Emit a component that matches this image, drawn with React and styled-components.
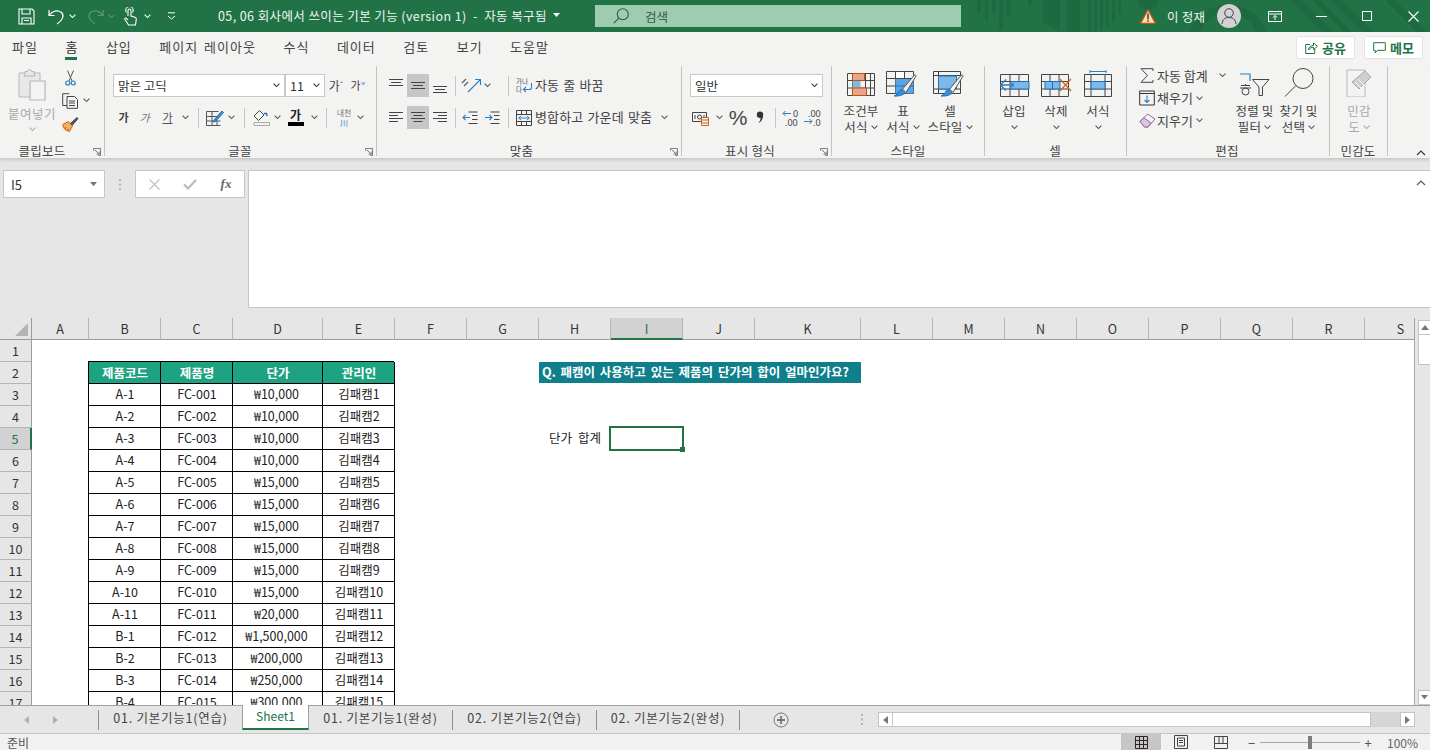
import React from 'react';
import styled, { createGlobalStyle } from 'styled-components';

const Global = createGlobalStyle`
  html, body { margin: 0; padding: 0; width: 1430px; height: 750px; overflow: hidden; background: #e6e6e6; }
  * { box-sizing: border-box; }
  body { font-family: "Noto Sans CJK KR", "Noto Sans", sans-serif; font-size: 13px; color: #444; }
`;

const Page = styled.div`width:1430px;height:750px;display:flex;flex-direction:column;overflow:hidden;`;

/* ---------- title bar ---------- */
const TitleBar = styled.header`position:relative;height:32px;background:#217346;display:flex;align-items:center;color:#fff;flex:none;overflow:hidden;`;
const Pattern = styled.svg`position:absolute;left:960px;top:0;width:470px;height:32px;`;
const Qat = styled.div`position:relative;display:flex;align-items:center;width:218px;padding-left:15px;height:32px;`;
const QatBtn = styled.span`display:flex;align-items:center;justify-content:center;flex:none;width:${p => p.$w}px;height:32px;`;
const Mirror = styled.span`display:flex;transform:scaleX(-1);`;
const DocTitle = styled.div`position:relative;width:377px;font-size:12.5px;letter-spacing:.4px;color:#eef6f1;white-space:pre;display:flex;align-items:center;gap:6px;padding-bottom:2px;`;
const SearchBox = styled.div`position:relative;width:366px;height:22px;background:#9fcbb0;display:flex;align-items:center;padding-left:18px;gap:16px;font-size:12.5px;color:#2c5a40;`;
const TitleRight = styled.div`position:relative;margin-left:auto;margin-right:-6px;display:flex;align-items:center;height:32px;`;
const UserName = styled.span`font-size:12.5px;color:#eef6f1;width:52px;padding-left:2px;letter-spacing:.2px;margin-left:7px;`;
const Avatar = styled.span`width:24px;height:24px;border-radius:50%;background:#d2d2d2;display:flex;align-items:center;justify-content:center;margin-right:11px;`;
const WinBtn = styled.span`display:flex;align-items:center;justify-content:center;width:${p => p.$w}px;height:32px;`;

/* ---------- tabs ---------- */
const TabRow = styled.nav`height:33px;background:#f3f3f2;flex:none;display:flex;align-items:flex-start;padding:2px 0 0 12px;gap:27.5px;`;
const RibbonTab = styled.span`position:relative;font-size:13px;letter-spacing:1px;word-spacing:2px;color:${p => p.$on ? '#2b2b2b' : '#444'};line-height:26px;
  ${p => p.$on && `&::after{content:"";position:absolute;left:0;right:1px;bottom:0;height:3px;background:#217346;}`}`;
const TabActions = styled.div`margin:2px 0 0 auto;display:flex;gap:9px;padding-right:7px;`;
const ActionBtn = styled.button`width:${p => p.$w}px;height:23px;background:#fff;border:1px solid #e3e3e3;border-radius:2px;display:flex;align-items:center;justify-content:center;gap:4px;color:#217346;font:700 13px "Noto Sans CJK KR",sans-serif;padding:0;`;

/* ---------- ribbon ---------- */
const Ribbon = styled.section`position:relative;z-index:1;height:93px;background:#f3f3f2;flex:none;display:flex;padding-top:1px;box-shadow:0 2px 3px rgba(0,0,0,.14);`;
const Group = styled.div`position:relative;width:${p => p.$w}px;height:90px;display:flex;flex-direction:column;flex:none;border-right:1px solid ${p => p.$plain ? 'transparent' : '#c4c4c4'};`;
const GroupBody = styled.div`flex:1;display:flex;min-height:0;padding:${p => p.$pad || '0 0 0 8px'};flex-direction:${p => p.$col ? 'column' : 'row'};`;
const GroupLabel = styled.div`height:16px;line-height:16px;margin-bottom:-3px;padding-right:${p => p.$pr ?? 1}px;text-align:${p => p.$end ? 'right' : 'center'};font-size:12.5px;letter-spacing:.2px;color:#444;`;
const Launcher = styled.svg`position:absolute;right:3px;bottom:0;width:8px;height:8px;`;
const ToolRow = styled.div`display:flex;align-items:center;height:23px;margin-bottom:${p => p.$mb ?? 9}px;`;
const Slot = styled.span`display:flex;align-items:center;justify-content:center;flex:none;width:${p => p.$w}px;height:${p => p.$h || 23}px;background:${p => p.$on ? '#c6c6c6' : 'transparent'};`;
const VSep = styled.span`display:block;width:1px;height:20px;background:#c6c6c6;`;
const Select = styled.div`width:${p => p.$w}px;height:23px;flex:none;background:#fff;border:1px solid #c8c8c8;display:flex;align-items:center;justify-content:space-between;padding:0 4px;font-size:12.5px;color:#333;`;
const ToolText = styled.span`font-size:13px;letter-spacing:.15px;word-spacing:1px;color:#444;white-space:pre;flex:none;padding-bottom:2px;width:${p => p.$w ? p.$w + 'px' : 'auto'};`;
const Glyph = styled.span`font-size:${p => p.$s || 11}px;color:${p => p.$c || '#444'};font-weight:${p => p.$b ? 700 : 400};font-style:${p => p.$i ? 'italic' : 'normal'};text-decoration:${p => p.$u ? 'underline' : 'none'};line-height:1;`;
const PercentGlyph = styled(Glyph)`font-family:"Liberation Sans",sans-serif;`;
const StackSlot = styled.span`display:flex;flex:none;flex-direction:column;align-items:center;justify-content:center;width:${p => p.$w}px;height:23px;`;
const ColorBar = styled.span`display:block;width:16px;height:4px;background:#000;margin-top:1px;`;
const TinyLine = styled.span`font-size:8px;line-height:10px;color:${p => p.$c || '#777'};`;
const PasteBtn = styled.div`width:48px;display:flex;flex-direction:column;align-items:center;padding-top:3px;color:#a9a9a9;font-size:12.5px;line-height:16px;flex:none;`;
const PasteLabel = styled.span`margin:5px 0 5px;letter-spacing:.5px;white-space:nowrap;`;
const ClipCol = styled.div`display:flex;flex-direction:column;align-items:flex-start;padding:0 0 0 6px;`;
const ClipRow = styled.div`height:23px;display:flex;align-items:center;gap:4px;`;
const BigBtn = styled.div`width:${p => p.$w}px;flex:none;display:flex;flex-direction:column;align-items:center;padding-top:${p => p.$pt ?? 6}px;color:${p => p.$dim ? '#a9a9a9' : '#444'};font-size:12.5px;letter-spacing:.2px;line-height:16px;text-align:center;`;
const BigIcon = styled.span`height:${p => p.$h || 25}px;display:flex;align-items:flex-end;justify-content:center;margin-bottom:6px;`;
const BigLine = styled.span`display:flex;align-items:center;gap:3px;white-space:nowrap;height:16px;`;
const EditCol = styled.div`width:106px;flex:none;display:flex;flex-direction:column;margin-top:-2px;padding-left:10px;`;
const EditRow = styled.div`height:22.5px;display:flex;align-items:center;font-size:13px;color:#444;white-space:pre;`;

/* ---------- formula area ---------- */
const FormulaArea = styled.section`height:160px;flex:none;background:#e6e6e6;display:flex;padding:12px 0 10px 3px;`;
const NameBox = styled.div`width:102px;height:28px;background:#fff;border:1px solid #c6c6c6;display:flex;align-items:center;justify-content:space-between;padding:0 7px 0 7px;font-size:13px;color:#333;`;
const Dots = styled.span`width:30px;height:28px;display:flex;align-items:center;justify-content:center;`;
const FxBox = styled.div`width:110px;height:28px;background:#fff;border:1px solid #c6c6c6;display:flex;align-items:center;`;
const FxSlot = styled.span`width:36px;display:flex;justify-content:center;`;
const Fx = styled.span`font:italic 700 13px "Liberation Serif",serif;color:#666;`;
const FormulaInput = styled.div`position:relative;flex:1;margin-left:3px;background:#fff;border:1px solid #c6c6c6;border-right:0;display:flex;justify-content:flex-end;padding:9px 4px 0 0;`;

/* ---------- sheet ---------- */
const Main = styled.main`height:387px;flex:none;display:flex;background:#e6e6e6;`;
const SheetFrame = styled.div`width:1415px;height:387px;overflow:hidden;border-right:1px solid #a6a6a6;background:#fff;`;
const SheetGrid = styled.div`display:grid;grid-template-columns:32px 57px 72px 72px 90px 72px 72px 72px 72px 72px 72px 106px repeat(8,72px);grid-auto-rows:22px;width:1436px;`;
const Corner = styled.div`background:#e6e6e6;border-right:1px solid #9c9c9c;border-bottom:1px solid #9c9c9c;display:flex;align-items:flex-end;justify-content:flex-end;padding:0 3px 3px 0;`;
const ColHead = styled.div`background:${p => p.$on ? '#d2d2d2' : '#e6e6e6'};border-right:1px solid #b4b4b4;border-bottom:${p => p.$on ? '2px solid #217346' : '1px solid #9c9c9c'};display:flex;align-items:center;justify-content:center;font-size:12.5px;color:${p => p.$on ? '#217346' : '#333'};`;
const RowHead = styled.div`background:${p => p.$on ? '#d2d2d2' : '#e6e6e6'};border-right:${p => p.$on ? '2px solid #217346' : '1px solid #9c9c9c'};border-bottom:1px solid #b4b4b4;display:flex;align-items:center;justify-content:center;font-size:12.5px;color:${p => p.$on ? '#217346' : '#333'};`;
const Cell = styled.div`position:relative;background:#fff;display:flex;align-items:center;justify-content:center;font-size:12.5px;word-spacing:3px;color:#222;white-space:nowrap;padding:0 ${p => p.$pr || 0}px 3px 0;`;
const TableCell = styled(Cell)`box-shadow:inset -1px -1px 0 #000,-1px -1px 0 #000;`;
const HeadCell = styled(TableCell)`background:#1da381;color:#fff;font-weight:700;padding-bottom:2px;`;
const QuestionCell = styled(Cell)`grid-column:span 4;height:21px;background:#0f7f8c;color:#fff;font-weight:700;justify-content:flex-start;padding:0 0 2px 3px;word-spacing:2px;`;
const Selection = styled.div`position:absolute;z-index:2;left:-2px;top:-2px;right:-1px;bottom:-1px;border:2px solid #217346;`;
const Handle = styled.span`position:absolute;right:-3px;bottom:-3px;width:5px;height:5px;background:#217346;`;
const VScroll = styled.aside`width:15px;height:387px;display:flex;flex-direction:column;align-items:flex-end;padding-top:2px;`;
const VArrow = styled.span`width:12px;height:15px;flex:none;background:#fff;border:1px solid #c4c4c4;border-right:0;display:flex;align-items:center;justify-content:center;`;
const VThumb = styled.span`width:12px;height:30px;flex:none;background:#fff;border:1px solid #c4c4c4;border-right:0;border-top:0;`;
const VFill = styled.span`flex:1;`;

/* ---------- sheet tabs ---------- */
const TabsBar = styled.div`position:relative;z-index:1;height:29px;flex:none;background:#e6e6e6;border-top:1px solid #a0a0a0;border-bottom:1px solid #c6c6c6;display:flex;align-items:center;`;
const TabNav = styled.div`width:98px;display:flex;padding-left:20px;gap:17px;align-items:center;`;
const NavArrow = styled.span`width:12px;display:flex;justify-content:center;`;
const TabSep = styled.span`width:1px;height:20px;background:#8f8f8f;flex:none;`;
const SheetTab = styled.div`width:${p => p.$w}px;flex:none;text-align:center;font-size:${p => p.$on ? 12 : 12.5}px;letter-spacing:${p => p.$on ? 0 : .75}px;color:${p => p.$on ? '#217346' : '#444'};background:${p => p.$on ? '#fff' : 'transparent'};height:${p => p.$on ? 25 : 22}px;line-height:${p => p.$on ? 21 : 18}px;border:${p => p.$on ? '1px solid #a0a0a0' : '0'};border-top:0;border-bottom:${p => p.$on ? '2px solid #217346' : '0'};align-self:${p => p.$on ? 'flex-start' : 'center'};margin-top:${p => p.$on ? -1 : 0}px;`;
const PlusSlot = styled.span`margin-left:31px;width:20px;display:flex;justify-content:center;`;
const BarDots = styled.span`margin-left:60px;width:22px;display:flex;justify-content:center;`;
const HScroll = styled.div`margin-left:5px;width:537px;height:15px;display:flex;`;
const HArrow = styled.span`width:15px;height:15px;flex:none;background:#fff;border:1px solid #c4c4c4;display:flex;align-items:center;justify-content:center;`;
const HThumb = styled.span`width:478px;height:15px;flex:none;background:#fff;border:1px solid #c4c4c4;border-left:0;`;
const HTrack = styled.span`flex:1;background:#d6d6d6;`;

/* ---------- status ---------- */
const StatusBar = styled.footer`height:16px;flex:none;background:#f1f1f1;display:flex;align-items:center;padding-left:7px;font-size:12px;color:#555;overflow:hidden;`;
const ViewBtn = styled.span`width:40px;height:16px;display:flex;align-items:center;justify-content:center;background:${p => p.$on ? '#c6c6c6' : 'transparent'};flex:none;`;
const StatusRight = styled.div`margin-left:auto;display:flex;align-items:center;height:16px;padding-right:13px;`;
const ZoomGap = styled.span`width:6px;flex:none;`;
const ZoomBar = styled.div`position:relative;width:100px;height:1px;background:#a8a8a8;margin:0 4px;`;
const ZoomThumb = styled.span`position:absolute;left:48px;top:-6px;width:4px;height:13px;background:#7f7a7f;`;
const ZoomPct = styled.span`margin-left:15px;width:30px;font-size:12px;color:#666;white-space:nowrap;`;

/* ---------- icons ---------- */
const Chev = ({ c = '#555', s = 7 }) => (
  <svg width={s} height={s * 0.62} viewBox="0 0 7 4.3"><path d="M.6.6 3.5 3.5 6.4.6" fill="none" stroke={c} strokeWidth="1.1" /></svg>
);
const Launch = () => (
  <Launcher viewBox="0 0 9 9"><path d="M.5 3V.5H8.5V8.5H6M2 2 7 7M7 4V7H4" fill="none" stroke="#6a6a6a" strokeWidth="1" /></Launcher>
);
const Save = () => (
  <svg width="17" height="17" viewBox="0 0 17 17" fill="none" stroke="#fff" strokeWidth="1.1"><path d="M1 1h13l2 2v13H1zM4 1v5h8V1M4 16v-6h9v6M6 12.5h5" /></svg>
);
const Undo = ({ c = '#fff' }) => (
  <svg width="17" height="17" viewBox="0 0 17 17" fill="none" stroke={c} strokeWidth="1.2"><path d="M1 2v5.500h5.500M1.500 7C4 3 9.500 1.500 13.500 4.500c3 3 1.500 7.500-4.500 11.500" /></svg>
);
const Touch = () => (
  <svg width="13" height="19" viewBox="0 0 13 19" fill="none" stroke="#fff" strokeWidth="1.100"><path d="M4 9V3.500a1.500 1.500 0 0 1 3 0V9l4 1.300c1 .4 1.400 1 1.300 2L11.500 18H4.500L1 12.500c-.6-1 .6-2 1.500-1.200L4 13" /><path d="M2.500 5.500a3.500 3.500 0 0 1-.8-2.200A3.600 3.600 0 0 1 9.200 3.300a3.500 3.500 0 0 1-.7 2.200" /></svg>
);
const Customize = () => (
  <svg width="9" height="8" viewBox="0 0 9 8" fill="none" stroke="#fff"><path d="M1 .8h7" /><path d="M1 4l3.500 3L8 4" /></svg>
);
const Caret = () => <svg width="7" height="4" viewBox="0 0 7 4"><path d="M0 0h7L3.500 4z" fill="#fff" /></svg>;
const Magnifier = () => (
  <svg width="16" height="16" viewBox="0 0 16 16" fill="none" stroke="#2c5a40" strokeWidth="1.1"><circle cx="9.800" cy="6.200" r="5.500" /><path d="M5.800 10.200.8 15.200" /></svg>
);
const FindIco = () => (
  <svg width="30" height="29" viewBox="0 0 30 29" fill="none" stroke="#444"><circle cx="19" cy="10.500" r="10" /><path d="M12 17.500 1 28.500" /></svg>
);
const Warn = () => (
  <svg width="16" height="15" viewBox="0 0 16 15"><path d="M8 .8 15.300 14.300H.7z" fill="#f8e0b0" stroke="#c8501a" strokeWidth="1.200" /><path d="M7.300 4.500h1.400v6H7.300zM7.300 11.300h1.400v1.500H7.300z" fill="#333" /></svg>
);
const User = () => (
  <svg width="18" height="18" viewBox="0 0 18 18" fill="none" stroke="#444" strokeWidth="1"><circle cx="9" cy="6" r="4.300" /><path d="M2 17c.5-5 3.500-6.500 7-6.500s6.500 1.500 7 6.500" /></svg>
);
const DisplayOpt = () => (
  <svg width="14" height="11" viewBox="0 0 14 11" fill="none" stroke="#fff"><path d="M.5.5h13v10H.5zM.5 3h13M7 9V4.500M5 6.500l2-2 2 2" /></svg>
);
const Minimize = () => <svg width="11" height="1" viewBox="0 0 11 1"><path d="M0 .5h11" stroke="#fff" /></svg>;
const Maximize = () => <svg width="10" height="10" viewBox="0 0 10 10"><path d="M.5.5h9v9h-9z" fill="none" stroke="#fff" /></svg>;
const CloseX = ({ c = '#fff', s = 11 }) => <svg width={s} height={s} viewBox="0 0 11 11"><path d="M.5.5l10 10M10.500.5l-10 10" stroke={c} fill="none" strokeWidth="1.100" /></svg>;
const ShareIco = () => (
  <svg width="13" height="13" viewBox="0 0 13 13" fill="none" stroke="#217346"><path d="M5 3.500H.7v9h9V8" /><path d="M3.500 9c0-3 2-4.500 5-4.500V2l4 3.300-4 3.300V6.200c-2 0-4 1-5 2.800z" /></svg>
);
const MemoIco = () => (
  <svg width="13" height="12" viewBox="0 0 13 12" fill="none" stroke="#217346"><path d="M.7.7h11.600v7.600H4.500L2.200 11V8.300H.7z" /></svg>
);
const PasteIco = () => (
  <svg width="28" height="32" viewBox="0 0 28 32" fill="none" stroke="#b8b8b8"><path d="M1 4h21v24H1z" fill="#e8e8e8" /><path d="M7 4V2.500h2.500a2 2 0 0 1 4 0H16V4l1 3H6z" fill="#e8e8e8" /><path d="M12 12h15v19H12z" fill="#f3f3f2" strokeWidth="1.200" /></svg>
);
const Scissors = () => (
  <svg width="11" height="16" viewBox="0 0 11 16" fill="none"><path d="M2.500 .5 7 11M8.500 .5 4 11" stroke="#555" /><circle cx="2.800" cy="13" r="2" stroke="#2b80c4" strokeWidth="1.200" /><circle cx="8.200" cy="13" r="2" stroke="#2b80c4" strokeWidth="1.200" /></svg>
);
const CopyIco = () => (
  <svg width="17" height="16" viewBox="0 0 17 16" fill="none" stroke="#444"><path d="M5 12.500H.7V.7h6.500" /><path d="M5 3.500h7.500l3 3v8.800H5z" fill="#f3f3f2" /><path d="M7 8h6M7 10h6M7 12.500h6" /></svg>
);
const Brush = () => (
  <svg width="17" height="16" viewBox="0 0 17 16"><path d="M.7 8.500 6.500 5.500l4 4.500-3 5.500-2-.5 1-2-2 1.500-1.500-1 1-2-2 1z" fill="#f4b060" stroke="#d0641a" /><path d="M8.500 7.500 15 1.500l1 1L10.500 9z" fill="#555" stroke="#444" /></svg>
);
const BorderIco = () => (
  <svg width="18" height="16" viewBox="0 0 18 16" fill="none"><path d="M.5 1.500h12M.5 15.500h14M.5 1.500v14M6 1.500v14M.5 6.500h12M.5 11h14M11 11v4.500" stroke="#555" /><path d="M8 10 16 1l1.500 1.500-8 9L7 12z" fill="#3a8fd6" stroke="#2170b8" /></svg>
);
const FillIco = () => (
  <svg width="17" height="17" viewBox="0 0 17 17" fill="none"><path d="M6.500 1.500 1 7l4.500 4.500L11 6z" stroke="#444" /><path d="M11 4.500h2.500L14 7" stroke="#2170b8" strokeWidth="1.500" /><path d="M1 13.500h15.500V16.500H1z" fill="#f3f3f2" stroke="#aaa" /></svg>
);
const Lines = ({ ys, xs }) => (
  <svg width="15" height="16" viewBox="0 0 15 16" fill="none" stroke="#444">{ys.map((y, i) => <path key={i} d={`M${xs[i][0]} ${y}h${xs[i][1]}`} />)}</svg>
);
const AL = { top: { ys: [1.5, 4.5, 7.5], xs: [[0, 14], [2, 10], [0, 14]] }, mid: { ys: [4.5, 7.500, 10.500], xs: [[0, 14], [2, 10], [0, 14]] }, bot: { ys: [8.5, 11.5, 14.5], xs: [[0, 14], [2, 10], [0, 14]] },
  left: { ys: [2.500, 5.500, 8.500, 11.500], xs: [[0, 14], [0, 9], [0, 14], [0, 9]] }, center: { ys: [2.500, 5.500, 8.500, 11.500], xs: [[0, 14], [2.500, 9], [0, 14], [2.500, 9]] }, right: { ys: [2.500, 5.500, 8.500, 11.500], xs: [[0, 14], [5, 9], [0, 14], [5, 9]] } };
const Orient = () => (
  <svg width="21" height="17" viewBox="0 0 21 17" fill="none"><path d="M7 15 19 3M14 2.500h5.500V8" stroke="#2b80c4" strokeWidth="1.100" /><path d="M1 6l4-4M3 9l4-4" stroke="#666" strokeWidth="1.400" /></svg>
);
const Indent = ({ flip }) => (
  <svg width="16" height="14" viewBox="0 0 16 14" fill="none"><path d="M6.500 1h9M10 4.500h5.500M10 8.500h5.500M6.500 12.500h9" stroke="#444" /><path d={flip ? 'M1 6.500h7M5.500 4l2.500 2.500L5.500 9' : 'M1 6.500h7M3.500 4 1 6.500 3.500 9'} stroke="#2b80c4" strokeWidth="1.100" /></svg>
);
const WrapIco = () => (
  <svg width="17" height="17" viewBox="0 0 17 17" fill="none" overflow="visible"><text x="0" y="6.500" fontSize="6.500" fill="#555" fontFamily="Noto Sans CJK KR">가나</text><text x="0" y="14.500" fontSize="6.500" fill="#555" fontFamily="Noto Sans CJK KR">다</text><path d="M15.500 6v4.500a2 2 0 0 1-2 2H7.500M10 10l-2.500 2.500L10 15" stroke="#2b80c4" strokeWidth="1.100" /></svg>
);
const MergeIco = () => (
  <svg width="16" height="16" viewBox="0 0 16 16" fill="none"><path d="M.5.5h15v15H.5zM.5 4.500h15M.5 11.500h15M5.500.5v4M10.500.5v4M5.500 11.500v4M10.500 11.500v4" stroke="#444" /><path d="M2.500 8h11M5 5.800 2.800 8 5 10.200M11 5.800 13.200 8 11 10.200" stroke="#2b80c4" /></svg>
);
const AcctIco = () => (
  <svg width="18" height="16" viewBox="0 0 18 16" fill="none"><path d="M.5 2.500h14v9H.5z" stroke="#444" /><circle cx="7.500" cy="7" r="2" stroke="#444" /><path d="M3 5v4M12 5v4" stroke="#444" /><path d="M9.500 7.500h7v8h-7z" fill="#f3f3f2" stroke="#d0641a" /><path d="M9.500 10h7M9.500 13h7" stroke="#d0641a" /></svg>
);
const CommaIco = () => (
  <svg width="8" height="13" viewBox="0 0 8 13"><circle cx="4" cy="3.800" r="3.200" fill="#333" /><path d="M7 4c.3 4-2 7-5 8.500 1.800-2 2.600-3.800 2.600-5.500z" fill="#333" /></svg>
);
const IncDec = ({ dec }) => dec ? (
  <svg width="19" height="18" viewBox="0 0 19 18" fill="none" overflow="visible"><text x="4" y="7.500" fontSize="9" fill="#444" fontFamily="Noto Sans">.00</text><text x="9" y="16.500" fontSize="9" fill="#444" fontFamily="Noto Sans">.0</text><path d="M0 12.500h8M5.500 10l2.500 2.500L5.500 15" stroke="#2b80c4" /></svg>
) : (
  <svg width="19" height="18" viewBox="0 0 19 18" fill="none" overflow="visible"><text x="11" y="7.500" fontSize="9" fill="#444" fontFamily="Noto Sans">0</text><text x="3" y="16.500" fontSize="9" fill="#444" fontFamily="Noto Sans">.00</text><path d="M1 4.500h8M3.500 2 1 4.500 3.500 7" stroke="#2b80c4" /></svg>
);
const Tbl = ({ w = 28, x = 0, v = [9.5, 18.5], h = [7.5, 15], c = '#444' }) => (
  <g fill="none" stroke={c}>
    <path d={`M${x + .5} .5h${w - 1}v22h-${w - 1}z`} />
    {v.map(p => <path key={p} d={`M${x + p} .5v22`} />)}
    {h.map(p => <path key={p} d={`M${x + .5} ${p}h${w - 1}`} />)}
  </g>
);
const PaintBrush = ({ dx = 0 }) => (
  <g transform={`translate(${dx} 0)`}>
    <path d="M15 20 28 4.500c1-1 2.500-.3 1.800 1L19 23z" fill="#f3f3f2" stroke="#555" />
    <path d="M13 20c2-2 5-1.500 6 .5 0 3-5 5-11 4.500 3-1 4-3 5-5z" fill="#3a8fd6" stroke="#2170b8" />
  </g>
);
const CondIco = () => (
  <svg width="29" height="24" viewBox="0 0 29 24">
    <Tbl v={[5.5, 18.5, 23.500]} />
    <path d="M5.500 8h8v7h-8z" fill="#7cb8e8" />
    <path d="M5.500 .5h12v7h-12zM5.500 15h14v7.500h-14z" fill="#e8a48c" stroke="#c8500a" />
  </svg>
);
const TableIco = () => (
  <svg width="34" height="26" viewBox="0 0 34 26">
    <Tbl w={28} v={[9.500, 18.500]} />
    <path d="M9.500 8h18v14.500h-18z" fill="#5aa5e4" /><path d="M9.500 .5h9v7h-9z" fill="#fff" stroke="#444" />
    <path d="M9.500 15h18" stroke="#2170b8" />
    <PaintBrush />
  </svg>
);
const CellStyleIco = () => (
  <svg width="34" height="26" viewBox="0 0 34 26">
    <Tbl w={28} v={[5.5]} h={[4.500, 18]} />
    <path d="M5.500 5h18v13h-18z" fill="#7cb8e8" stroke="#2170b8" />
    <PaintBrush />
  </svg>
);
const InsertIco = () => (
  <svg width="31" height="24" viewBox="0 0 31 24"><g transform="translate(1 1)"><Tbl v={[10, 19]} w={29} /><path d="M11 7.500h18v7.500H11z" fill="#7cb8e8" stroke="#2170b8" /><path d="M0 11h13M6 5.500 .5 11 6 16.500M13 9v4" fill="none" stroke="#2b80c4" strokeWidth="1.300" /></g></svg>
);
const DeleteIco = () => (
  <svg width="31" height="24" viewBox="0 0 31 24"><g transform="translate(0 1)"><Tbl v={[9, 18]} w={28} /><path d="M4 7.500h15v7.500H4z" fill="#7cb8e8" stroke="#2170b8" /><path d="M11.500 7.500v7.500" stroke="#2170b8" /><path d="M19 5 30 17M30 5 19 17" stroke="#d0641a" strokeWidth="1.200" /></g></svg>
);
const FormatIco = () => (
  <svg width="28" height="27" viewBox="0 0 28 27"><path d="M6 1.500h16M6 0v3M22 0v3" stroke="#2b80c4" fill="none" /><g transform="translate(0 4)"><Tbl v={[7, 21]} w={28} /><path d="M7 7.500h14V15H7z" fill="#7cb8e8" stroke="#2170b8" /></g></svg>
);
const Sigma = () => <svg width="14" height="15" viewBox="0 0 14 15" fill="none" stroke="#444"><path d="M13 3V.7H1L7.500 7.500 1 14.300h12V12" /></svg>;
const FillDown = () => <svg width="16" height="16" viewBox="0 0 16 16" fill="none"><path d="M.7 1h14.600v14H.7zM.7 3.500h14.600" stroke="#333" /><path d="M8 5.500v7M5.500 10 8 12.500 10.500 10" stroke="#2b80c4" strokeWidth="1.100" /></svg>;
const Eraser = () => <svg width="17" height="15" viewBox="0 0 17 15" fill="none"><path d="M1 8.500 8.500 1 16 6 9 14H5.500z" fill="#f3f3f2" stroke="#8c6ba0" /><path d="M1 8.500 5 4.800 12 10 9 14H5.500z" fill="#d8c6e0" stroke="#8c6ba0" /></svg>;
const SortFilter = () => (
  <svg width="31" height="24" viewBox="0 0 31 24" fill="none">
    <path d="M1 1h10v7" stroke="#2b80c4" strokeWidth="1.200" />
    <path d="M2 12.500h9M6.500 11v1.500" stroke="#444" /><circle cx="6.500" cy="18.500" r="3.500" stroke="#444" /><path d="M1 15h11" stroke="#444" />
    <path d="M13.500 6.500h16.500l-6.500 7.500v8.500h-3.500V14z" stroke="#444" />
  </svg>
);
const SensIco = () => (
  <svg width="27" height="30" viewBox="0 0 27 30" fill="none"><path d="M1 3h18v27H1z" stroke="#b8b8b8" /><path d="M6 15 19 4l6 6-12 12z" fill="#cfcfcf" stroke="#a8a8a8" /><path d="M9 15l7 7M12 12l7 7" stroke="#f3f3f2" /></svg>
);
const Up = ({ c = '#333' }) => <svg width="10" height="6" viewBox="0 0 10 6" fill="none"><path d="M1 5 5 1l4 4" stroke={c} strokeWidth="1.100" /></svg>;
const TriDown = ({ c = '#777', w = 7 }) => <svg width={w} height={w * .6} viewBox="0 0 7 4.200"><path d="M0 0h7L3.500 4.200z" fill={c} /></svg>;
const TriUp = () => <svg width="8" height="5" viewBox="0 0 8 5"><path d="M0 5h8L4 0z" fill="#777" /></svg>;
const TriSide = ({ left, c = '#777' }) => <svg width="5" height="8" viewBox="0 0 5 8"><path d={left ? 'M5 0v8L0 4z' : 'M0 0v8l5-4z'} fill={c} /></svg>;
const DotCol = ({ c = '#b5b5b5' }) => <svg width="2" height="11" viewBox="0 0 2 11"><path d="M0 0h2v2H0zM0 4.500h2v2H0zM0 9h2v2H0z" fill={c} /></svg>;
const CornerTri = () => <svg width="13" height="13" viewBox="0 0 13 13"><path d="M13 0v13H0z" fill="#b5b5b5" /></svg>;
const Check = () => <svg width="14" height="11" viewBox="0 0 14 11" fill="none"><path d="M1 5.500 5 9.500 13 1" stroke="#b8b8b8" strokeWidth="2" /></svg>;
const PlusCircle = () => <svg width="16" height="16" viewBox="0 0 16 16" fill="none" stroke="#777"><circle cx="8" cy="8" r="7" /><path d="M4 8h8M8 4v8" strokeWidth="1.800" /></svg>;
const GridView = () => <svg width="13" height="13" viewBox="0 0 13 13" fill="none" stroke="#322"><path d="M.5.500h12v12H.5zM4.500.5v12M8.500.5v12M.5 4.500h12M.5 8.500h12" /></svg>;
const PageView = () => <svg width="14" height="14" viewBox="0 0 14 14" fill="none" stroke="#444"><path d="M.5.5h13v13H.5zM3.500 3h7v8h-7zM5 5.500h4M5 7.500h4" /></svg>;
const BreakView = () => <svg width="14" height="13" viewBox="0 0 14 13" fill="none" stroke="#444"><path d="M.5.500h13v12H.5zM.5 7.500h13M5 .5v7M9 .5v7" /></svg>;

/* ---------- data ---------- */
const COLS = ['A','B','C','D','E','F','G','H','I','J','K','L','M','N','O','P','Q','R','S'];
const codes = ['A-1','A-2','A-3','A-4','A-5','A-6','A-7','A-8','A-9','A-10','A-11','B-1','B-2','B-3','B-4'];
const prices = ['10,000','10,000','10,000','10,000','15,000','15,000','15,000','15,000','15,000','15,000','20,000','1,500,000','200,000','250,000','300,000'];
const TABS = ['파일','홈','삽입','페이지 레이아웃','수식','데이터','검토','보기','도움말'];
const HEADS = ['제품코드','제품명','단가','관리인'];

const row = r => {
  const out = [];
  COLS.forEach((c, i) => {
    const k = `${c}${r}`;
    if (r === 2 && i >= 1 && i <= 4) { out.push(<HeadCell key={k}>{HEADS[i - 1]}</HeadCell>); return; }
    if (r >= 3 && i >= 1 && i <= 4) {
      const n = r - 3;
      const v = [codes[n], `FC-${String(n + 1).padStart(3, '0')}`, `₩${prices[n]}`, `김패캠${n + 1}`][i - 1];
      out.push(<TableCell key={k} $pr={i === 3 ? 3 : 0}>{v}</TableCell>);
      return;
    }
    if (r === 2 && c === 'H') { out.push(<QuestionCell key={k}>Q. 패캠이 사용하고 있는 제품의 단가의 합이 얼마인가요?</QuestionCell>); return; }
    if (r === 2 && (c === 'I' || c === 'J' || c === 'K')) return;
    if (r === 5 && c === 'H') { out.push(<Cell key={k}>단가 합계</Cell>); return; }
    if (r === 5 && c === 'I') { out.push(<Cell key={k}><Selection><Handle /></Selection></Cell>); return; }
    out.push(<Cell key={k} />);
  });
  return out;
};

const Big = ({ w = 42, icon, l1, l2 }) => (
  <BigBtn $w={w}>
    <BigIcon>{icon}</BigIcon>
    <BigLine>{l1}</BigLine>
    <BigLine>{l2}<Chev /></BigLine>
  </BigBtn>
);

export default function App() {
  return (
    <Page>
      <Global />
      <TitleBar>
        <Pattern viewBox="960 0 470 32" fill="#1e6a40">
          <path d="M977 0h4v13h-4zM985 0h3v20h-3zM992 0h4v13h-4zM999 0h4v30h-4zM1007 0h4v17h-4zM1027 0h6l-3 8zM1043 0h17v32l-17-10zM1067 0h13v32h-13zM1088 0h3v32h-3zM1094 0h3v32h-3zM1100 0h3v30h-3zM1106 0h3v28h-3zM1112 0h3v22h-3zM1118 0h3v14h-3zM1137 0h22c-1 7-6 10-11 10s-10-3-11-10z" />
          <path d="M1190 32a40 40 0 0 1 76 0h-10a30 30 0 0 0-56 0z" />
          <path d="M1290 0h12l32 32h-12zM1312 0h8l32 32h-8zM1330 0h12l32 32h-12zM1385 0h10l32 32h-10z" />
        </Pattern>
        <Qat>
          <QatBtn $w={23}><Save /></QatBtn>
          <QatBtn $w={9} />
          <QatBtn $w={18}><Undo /></QatBtn>
          <QatBtn $w={15}><Chev c="#fff" /></QatBtn>
          <QatBtn $w={7} />
          <QatBtn $w={16}><Mirror><Undo c="#5b9874" /></Mirror></QatBtn>
          <QatBtn $w={17}><Chev c="#5b9874" /></QatBtn>
          <QatBtn $w={3} />
          <QatBtn $w={14}><Touch /></QatBtn>
          <QatBtn $w={21}><Chev c="#fff" /></QatBtn>
          <QatBtn $w={26}><Customize /></QatBtn>
        </Qat>
        <DocTitle>05, 06 회사에서 쓰이는 기본 기능 (version 1)  -  자동 복구됨<Caret /></DocTitle>
        <SearchBox><Magnifier />검색</SearchBox>
        <TitleRight>
          <WinBtn $w={20}><Warn /></WinBtn>
          <UserName>이 정재</UserName>
          <Avatar><User /></Avatar>
          <WinBtn $w={46}><DisplayOpt /></WinBtn>
          <WinBtn $w={46}><Minimize /></WinBtn>
          <WinBtn $w={46}><Maximize /></WinBtn>
          <WinBtn $w={46}><CloseX /></WinBtn>
        </TitleRight>
      </TitleBar>

      <TabRow>
        {TABS.map(t => <RibbonTab key={t} $on={t === '홈'}>{t}</RibbonTab>)}
        <TabActions>
          <ActionBtn $w={59}><ShareIco />공유</ActionBtn>
          <ActionBtn $w={59}><MemoIco />메모</ActionBtn>
        </TabActions>
      </TabRow>

      <Ribbon>
        <Group $w={105}>
          <GroupBody>
            <PasteBtn>
              <PasteIco />
              <PasteLabel>붙여넣기</PasteLabel>
              <Chev c="#aaa" />
            </PasteBtn>
            <ClipCol>
              <ClipRow><Slot $w={16}><Scissors /></Slot></ClipRow>
              <ClipRow><CopyIco /><Chev /></ClipRow>
              <ClipRow><Brush /></ClipRow>
            </ClipCol>
          </GroupBody>
          <GroupLabel $pr={20}>클립보드</GroupLabel>
          <Launch />
        </Group>

        <Group $w={272}>
          <GroupBody $col $pad="8px 0 0 8px">
            <ToolRow>
              <Select $w={172}>맑은 고딕<Chev c="#333" /></Select>
              <Select $w={40}>11<Chev c="#333" /></Select>
              <Slot $w={22}><Glyph $s={12}>가</Glyph><Glyph $s={8} $c="#2b80c4">ˆ</Glyph></Slot>
              <Slot $w={22}><Glyph $s={11}>가</Glyph><Glyph $s={8} $c="#2b80c4">ˇ</Glyph></Slot>
            </ToolRow>
            <ToolRow>
              <Slot $w={21}><Glyph $b>가</Glyph></Slot>
              <Slot $w={21}><Glyph $i $c="#777">가</Glyph></Slot>
              <Slot $w={25}><Glyph $u $c="#555">가</Glyph></Slot>
              <Slot $w={11}><Chev /></Slot>
              <Slot $w={14}><VSep /></Slot>
              <Slot $w={19}><BorderIco /></Slot>
              <Slot $w={14}><Chev /></Slot>
              <Slot $w={12}><VSep /></Slot>
              <Slot $w={22}><FillIco /></Slot>
              <Slot $w={11}><Chev /></Slot>
              <StackSlot $w={25}><Glyph $b $s={12} $c="#222">가</Glyph><ColorBar /></StackSlot>
              <Slot $w={12}><Chev /></Slot>
              <Slot $w={13}><VSep /></Slot>
              <StackSlot $w={22}><TinyLine>내천</TinyLine><TinyLine $c="#2b80c4">川</TinyLine></StackSlot>
              <Slot $w={11}><Chev /></Slot>
            </ToolRow>
          </GroupBody>
          <GroupLabel $pr={1}>글꼴</GroupLabel>
          <Launch />
        </Group>

        <Group $w={305}>
          <GroupBody $col $pad="8px 0 0 8px">
            <ToolRow>
              <Slot $w={22}><Lines {...AL.top} /></Slot>
              <Slot $w={22} $on><Lines {...AL.mid} /></Slot>
              <Slot $w={22}><Lines {...AL.bot} /></Slot>
              <Slot $w={8}><VSep /></Slot>
              <Slot $w={24}><Orient /></Slot>
              <Slot $w={8}><Chev /></Slot>
              <Slot $w={12} />
              <Slot $w={10}><VSep /></Slot>
              <Slot $w={22}><WrapIco /></Slot>
              <ToolText>자동 줄 바꿈</ToolText>
            </ToolRow>
            <ToolRow>
              <Slot $w={22}><Lines {...AL.left} /></Slot>
              <Slot $w={22} $on><Lines {...AL.center} /></Slot>
              <Slot $w={22}><Lines {...AL.right} /></Slot>
              <Slot $w={8}><VSep /></Slot>
              <Slot $w={21}><Indent /></Slot>
              <Slot $w={23}><Indent flip /></Slot>
              <Slot $w={10}><VSep /></Slot>
              <Slot $w={22}><MergeIco /></Slot>
              <ToolText $w={123}>병합하고 가운데 맞춤</ToolText>
              <Slot $w={12}><Chev /></Slot>
            </ToolRow>
          </GroupBody>
          <GroupLabel $pr={15}>맞춤</GroupLabel>
          <Launch />
        </Group>

        <Group $w={150}>
          <GroupBody $col $pad="8px 0 0 8px">
            <ToolRow>
              <Select $w={133}>일반<Chev c="#333" /></Select>
            </ToolRow>
            <ToolRow>
              <Slot $w={22}><AcctIco /></Slot>
              <Slot $w={14}><Chev /></Slot>
              <Slot $w={24}><PercentGlyph $s={21}>%</PercentGlyph></Slot>
              <Slot $w={20}><CommaIco /></Slot>
              <Slot $w={10}><VSep /></Slot>
              <Slot $w={23}><IncDec /></Slot>
              <Slot $w={21}><IncDec dec /></Slot>
            </ToolRow>
          </GroupBody>
          <GroupLabel $pr={13}>표시 형식</GroupLabel>
          <Launch />
        </Group>

        <Group $w={153}>
          <GroupBody>
            <Big icon={<CondIco />} l1="조건부" l2="서식" />
            <Big icon={<TableIco />} l1="표" l2="서식" />
            <Big w={52} icon={<CellStyleIco />} l1="셀" l2="스타일" />
          </GroupBody>
          <GroupLabel $pr={0}>스타일</GroupLabel>
        </Group>

        <Group $w={142}>
          <GroupBody>
            <BigBtn $w={42}><BigIcon><InsertIco /></BigIcon><BigLine>삽입</BigLine><BigLine><Chev /></BigLine></BigBtn>
            <BigBtn $w={42}><BigIcon><DeleteIco /></BigIcon><BigLine>삭제</BigLine><BigLine><Chev /></BigLine></BigBtn>
            <BigBtn $w={42}><BigIcon><FormatIco /></BigIcon><BigLine>서식</BigLine><BigLine><Chev /></BigLine></BigBtn>
          </GroupBody>
          <GroupLabel>셀</GroupLabel>
        </Group>

        <Group $w={203}>
          <GroupBody $pad="0">
            <EditCol>
              <EditRow><Slot $w={20} $h={22}><Sigma /></Slot>자동 합계<Slot $w={29} $h={22}><Chev /></Slot></EditRow>
              <EditRow><Slot $w={20} $h={22}><FillDown /></Slot>채우기<Slot $w={13} $h={22}><Chev /></Slot></EditRow>
              <EditRow><Slot $w={20} $h={22}><Eraser /></Slot>지우기<Slot $w={13} $h={22}><Chev /></Slot></EditRow>
            </EditCol>
            <BigBtn $w={43}><BigIcon><SortFilter /></BigIcon><BigLine>정렬 및</BigLine><BigLine>필터<Chev /></BigLine></BigBtn>
            <BigBtn $w={45}><BigIcon><FindIco /></BigIcon><BigLine>찾기 및</BigLine><BigLine>선택<Chev /></BigLine></BigBtn>
          </GroupBody>
          <GroupLabel $pr={2}>편집</GroupLabel>
        </Group>

        <Group $w={58}>
          <GroupBody $pad="0 0 0 7px">
            <BigBtn $w={44} $dim $pt={3}><BigIcon $h={28}><SensIco /></BigIcon><BigLine>민감</BigLine><BigLine>도<Chev c="#aaa" /></BigLine></BigBtn>
          </GroupBody>
          <GroupLabel>민감도</GroupLabel>
        </Group>

        <Group $w={42} $plain>
          <GroupBody $pad="0" />
          <GroupLabel $end $pr={3}><Up /></GroupLabel>
        </Group>
      </Ribbon>

      <FormulaArea>
        <NameBox>I5<TriDown /></NameBox>
        <Dots><DotCol /></Dots>
        <FxBox>
          <FxSlot><CloseX c="#c0c0c0" s={11} /></FxSlot>
          <FxSlot><Check /></FxSlot>
          <FxSlot><Fx>fx</Fx></FxSlot>
        </FxBox>
        <FormulaInput><Up c="#555" /></FormulaInput>
      </FormulaArea>

      <Main>
        <SheetFrame>
          <SheetGrid>
            <Corner><CornerTri /></Corner>
            {COLS.map(c => <ColHead key={c} $on={c === 'I'}>{c}</ColHead>)}
            {Array.from({ length: 17 }, (_, i) => i + 1).map(r => (
              <React.Fragment key={r}>
                <RowHead $on={r === 5}>{r}</RowHead>
                {r === 1 ? COLS.map(c => <Cell key={c + r} />) : row(r)}
              </React.Fragment>
            ))}
          </SheetGrid>
        </SheetFrame>
        <VScroll>
          <VArrow><TriUp /></VArrow>
          <VThumb />
          <VFill />
          <VArrow><TriDown /></VArrow>
        </VScroll>
      </Main>

      <TabsBar>
        <TabNav>
          <NavArrow><TriSide left c="#b0b0b0" /></NavArrow>
          <NavArrow><TriSide c="#b0b0b0" /></NavArrow>
        </TabNav>
        <TabSep />
        <SheetTab $w={143}>01. 기본기능1(연습)</SheetTab>
        <SheetTab $w={67} $on>Sheet1</SheetTab>
        <SheetTab $w={143}>01. 기본기능1(완성)</SheetTab>
        <TabSep />
        <SheetTab $w={143}>02. 기본기능2(연습)</SheetTab>
        <TabSep />
        <SheetTab $w={142}>02. 기본기능2(완성)</SheetTab>
        <TabSep />
        <PlusSlot><PlusCircle /></PlusSlot>
        <BarDots><DotCol /></BarDots>
        <HScroll>
          <HArrow><TriSide left /></HArrow>
          <HThumb />
          <HTrack />
          <HArrow><TriSide /></HArrow>
        </HScroll>
      </TabsBar>

      <StatusBar>
        준비
        <StatusRight>
          <ViewBtn $on><GridView /></ViewBtn>
          <ViewBtn><PageView /></ViewBtn>
          <ViewBtn><BreakView /></ViewBtn>
          <ZoomGap />
          <Slot $w={9} $h={16}><Glyph $s={13} $c="#555">−</Glyph></Slot>
          <ZoomBar><ZoomThumb /></ZoomBar>
          <Slot $w={8} $h={16}><Glyph $s={13} $c="#555">+</Glyph></Slot>
          <ZoomPct>100%</ZoomPct>
        </StatusRight>
      </StatusBar>
    </Page>
  );
}
